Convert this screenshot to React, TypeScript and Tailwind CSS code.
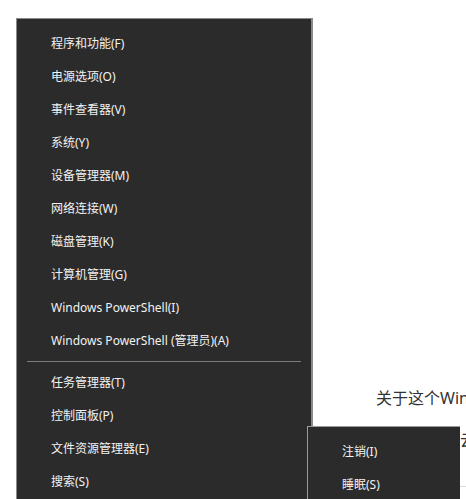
const font = { fontFamily: '"Noto Sans", "Noto Sans CJK SC", sans-serif' };

const topItems = [
  '程序和功能(F)',
  '电源选项(O)',
  '事件查看器(V)',
  '系统(Y)',
  '设备管理器(M)',
  '网络连接(W)',
  '磁盘管理(K)',
  '计算机管理(G)',
  'Windows PowerShell(I)',
  'Windows PowerShell (管理员)(A)',
];

const bottomItems = ['任务管理器(T)', '控制面板(P)', '文件资源管理器(E)', '搜索(S)'];

const subItems = ['注销(I)', '睡眠(S)'];

function MenuRow({ label }: { label: string }) {
  return (
    <div className="h-[33px] flex items-center pl-[34px] text-[12px] text-[#f2f2f2] whitespace-nowrap">
      {label}
    </div>
  );
}

export default function App() {
  return (
    <div className="relative w-[466px] h-[499px] overflow-hidden bg-white" style={font}>
      {/* page content behind the menus */}
      <div className="absolute left-[376px] top-[386px] text-[16px] text-[#333] whitespace-nowrap">
        关于这个Windows
      </div>
      <div className="absolute left-[460px] top-[428px] text-[16px] text-[#333]">云</div>
      <div className="absolute left-[455px] top-[486px] w-[20px] h-px bg-[#d9d9d9]" />

      <div className="pt-[18px] pl-[16px]">
        <div className="w-[297px] h-[500px] bg-[#2b2b2b] border-t border-l border-r-2 border-[#8a8a8a] pt-[8px]">
          {topItems.map((t) => (
            <MenuRow key={t} label={t} />
          ))}
          <div className="h-[9px] flex items-center pl-[10px] pr-[10px]">
            <div className="w-full h-px bg-[#7c7c7c]" />
          </div>
          {bottomItems.map((t) => (
            <MenuRow key={t} label={t} />
          ))}
        </div>
      </div>

      <div className="absolute left-[307px] top-[426px] w-[153px] h-[80px] bg-[#2b2b2b] border-t border-l border-[#9a9a9a] pt-[8px]">
        {subItems.map((t) => (
          <MenuRow key={t} label={t} />
        ))}
      </div>
    </div>
  );
}
